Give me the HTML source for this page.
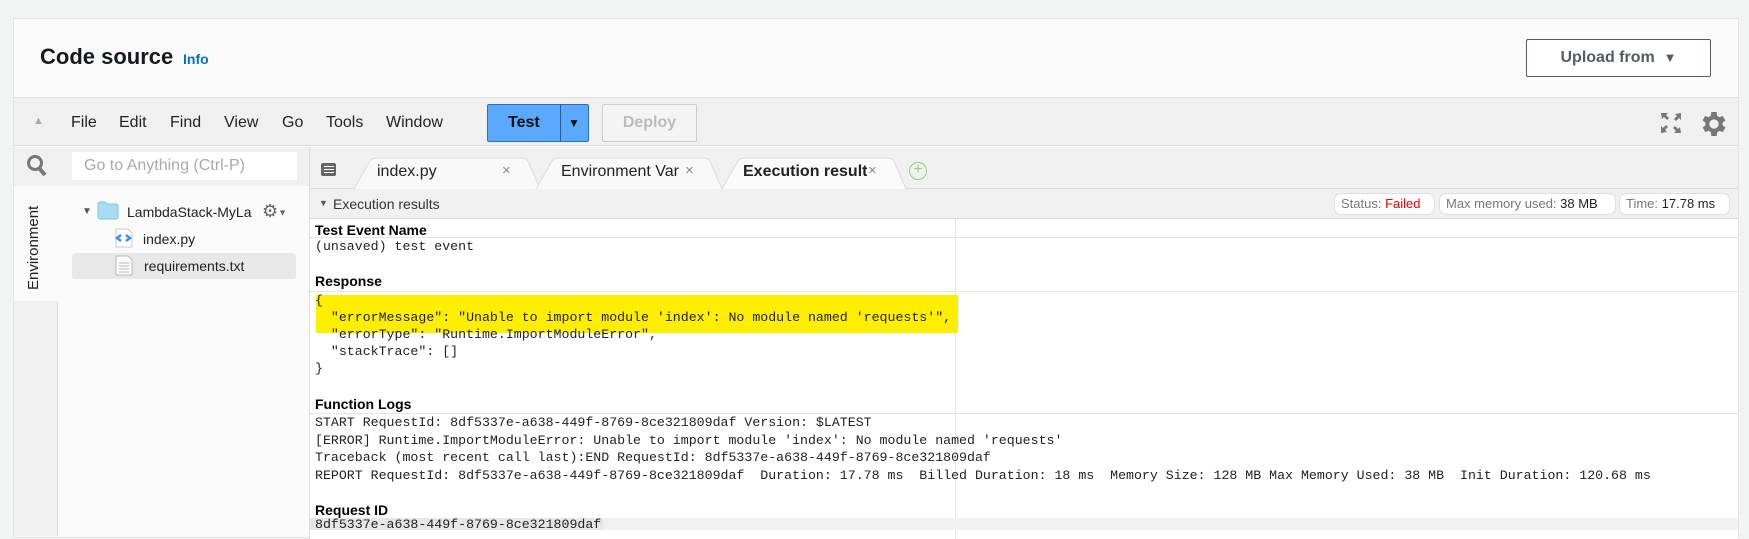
<!DOCTYPE html>
<html><head><meta charset="utf-8"><style>
*{box-sizing:border-box;margin:0;padding:0}
body{width:1749px;height:530px;background:#f2f3f3;font-family:"Liberation Sans",Arial,sans-serif;position:relative;overflow:hidden;color:#16191f}
.a{position:absolute}
.card{left:13px;top:18px;width:1726px;height:520px;background:#fafafa;border:1px solid #e4e4e4}
.mono{font-family:"Liberation Mono",monospace;font-size:13.25px;color:#222;white-space:pre}
.h{font-weight:bold;font-size:14px;color:#000}
.menu{font-size:16px;color:#222;top:114px}
.chip{top:193px;height:22px;border:1px solid #ddd;border-radius:7px;background:#fff;font-size:13px;color:#777;line-height:20px;padding:0 6px;white-space:nowrap}
.chip b{font-weight:normal;color:#222}
</style></head><body>
<div class="a card"></div>
<div class="a" style="left:14px;top:19px;width:1724px;height:78px;background:#fafafa"></div>
<div class="a" style="left:40px;top:44px;font-size:22px;font-weight:bold;color:#16191f">Code source</div>
<div class="a" style="left:183px;top:51px;font-size:14px;font-weight:bold;color:#0073bb">Info</div>
<div class="a" style="left:1526px;top:39px;width:185px;height:38px;border:1px solid #545b64;border-radius:2px;background:#fff;font-size:16px;font-weight:bold;color:#545b64;line-height:36px;text-align:center">Upload from &nbsp;<span style="font-size:13px">▼</span></div>
<div class="a" style="left:14px;top:97px;width:1724px;height:49px;background:#f0f0f0;border-top:1px solid #e0e0e0;border-bottom:1px solid #dcdcdc"></div>
<div class="a" style="left:33px;top:115px;font-size:11px;color:#aaa">▲</div>
<div class="a menu" style="left:71px">File</div>
<div class="a menu" style="left:119px">Edit</div>
<div class="a menu" style="left:170px">Find</div>
<div class="a menu" style="left:224px">View</div>
<div class="a menu" style="left:282px">Go</div>
<div class="a menu" style="left:326px">Tools</div>
<div class="a menu" style="left:386px">Window</div>
<div class="a" style="left:487px;top:104px;width:102px;height:38px;background:#5ba8ff;border:1px solid #2a6fc0;border-radius:2px"></div>
<div class="a" style="left:560px;top:104px;width:1px;height:38px;background:#2a5a9a"></div>
<div class="a" style="left:508px;top:114px;font-size:16px;font-weight:bold;color:#111">Test</div>
<div class="a" style="left:568px;top:116px;font-size:12px;color:#111">▼</div>
<div class="a" style="left:602px;top:104px;width:95px;height:38px;border:1px solid #ccc;border-radius:2px;background:#f4f4f4;font-size:16px;font-weight:bold;color:#bbb;text-align:center;line-height:36px">Deploy</div>
<svg class="a" style="left:1660px;top:112px" width="22" height="22" viewBox="0 0 22 22" fill="#777"><path d="M1 1h7l-2 2 3 3-2 2-3-3-2 2zM21 1v7l-2-2-3 3-2-2 3-3-2-2zM1 21v-7l2 2 3-3 2 2-3 3 2 2zM21 21h-7l2-2-3-3 2-2 3 3 2-2z"/></svg>
<svg class="a" style="left:1698px;top:108px" width="32" height="32" viewBox="0 0 24 24"><path fill="#777" d="M19.4 13a7.5 7.5 0 000-2l2.1-1.6-2-3.5-2.5 1a7.4 7.4 0 00-1.7-1L15 3h-4l-.4 2.9a7.4 7.4 0 00-1.7 1l-2.5-1-2 3.5L6.6 11a7.5 7.5 0 000 2l-2.1 1.6 2 3.5 2.5-1a7.4 7.4 0 001.7 1L11 21h4l.4-2.9a7.4 7.4 0 001.7-1l2.5 1 2-3.5zM13 15.5a3.5 3.5 0 110-7 3.5 3.5 0 010 7z" transform="translate(-1 0)"/></svg>
<div class="a" style="left:14px;top:147px;width:295px;height:39px;background:#f0f0f0"></div>
<svg class="a" style="left:26px;top:154px" width="22" height="24" viewBox="0 0 22 24"><circle cx="9" cy="9" r="6.5" fill="none" stroke="#777" stroke-width="3"/><path d="M13 14l6 7" stroke="#777" stroke-width="4"/></svg>
<div class="a" style="left:72px;top:152px;width:225px;height:28px;background:#fff;font-size:16px;color:#aaa;line-height:28px;padding-left:12px">Go to Anything (Ctrl-P)</div>
<div class="a" style="left:14px;top:186px;width:44px;height:350px;background:#f0f0f0;border-right:1px solid #ddd"></div>
<div class="a" style="left:14px;top:186px;width:45px;height:115px;background:#fafafa"></div>
<div class="a" style="left:25px;top:290px;transform:rotate(-90deg);transform-origin:0 0;font-size:15px;color:#222;white-space:nowrap">Environment</div>
<div class="a" style="left:82px;top:206px;font-size:10px;color:#555">▼</div>
<svg class="a" style="left:97px;top:201px" width="22" height="19" viewBox="0 0 22 19"><path d="M1 3a2 2 0 012-2h5l2 2h9a2 2 0 012 2v11a2 2 0 01-2 2H3a2 2 0 01-2-2z" fill="#a8dcf5" stroke="#7cc4ea"/></svg>
<div class="a" style="left:127px;top:204px;font-size:14px;color:#222">LambdaStack-MyLa</div>
<div class="a" style="left:262px;top:201px;font-size:18px;color:#666">⚙<span style="font-size:9px;vertical-align:middle">▼</span></div>
<svg class="a" style="left:114px;top:228px" width="20" height="20" viewBox="0 0 20 20"><path d="M2 1h12l4 4v14H2z" fill="#fff" stroke="#ccc"/><path d="M7 7l-4 3 4 3M12 7l4 3-4 3" stroke="#3b8eea" stroke-width="2.5" fill="none"/></svg>
<div class="a" style="left:143px;top:231px;font-size:14px;color:#222">index.py</div>
<div class="a" style="left:72px;top:253px;width:224px;height:26px;background:#e8e8e8;border-radius:3px"></div>
<svg class="a" style="left:115px;top:255px" width="19" height="21" viewBox="0 0 19 21"><path d="M1 1h12l4 4v15H1z" fill="#fafafa" stroke="#bbb"/><path d="M4 8h10M4 11h10M4 14h10M4 17h10" stroke="#bbb"/></svg>
<div class="a" style="left:144px;top:258px;font-size:14px;color:#222">requirements.txt</div>
<div class="a" style="left:309px;top:147px;width:1429px;height:42px;background:#f0f0f0;border-bottom:1px solid #ddd;border-left:1px solid #ddd"></div>
<div class="a" style="left:321px;top:163px;width:15px;height:13px;border-radius:2px;background:#666"></div>
<div class="a" style="left:324px;top:166px;width:10px;height:1px;background:#fff;box-shadow:0 3px 0 #fff,0 6px 0 #fff"></div>
<svg class="a" style="left:350px;top:157px" width="560" height="32"><g fill="#f8f8f8" stroke="#ddd"><path d="M4 32 L20 4 Q22 1 28 1 H170 Q176 1 178 4 L190 32"/><path d="M186 32 L202 4 Q204 1 210 1 H352 Q358 1 360 4 L372 32"/><path d="M372 32 L388 4 Q390 1 396 1 H536 Q542 1 544 4 L556 32" fill="#fafafa"/></g></svg>
<div class="a" style="left:377px;top:163px;font-size:16px;color:#222">index.py</div>
<div class="a" style="left:502px;top:162px;font-size:15px;color:#888">×</div>
<div class="a" style="left:561px;top:163px;font-size:16px;color:#222;width:124px;overflow:hidden;white-space:nowrap">Environment Var</div>
<div class="a" style="left:685px;top:162px;font-size:15px;color:#888">×</div>
<div class="a" style="left:743px;top:163px;font-size:16px;font-weight:bold;color:#222;width:124px;overflow:hidden;white-space:nowrap">Execution results</div>
<div class="a" style="left:868px;top:162px;font-size:15px;color:#888">×</div>
<div class="a" style="left:909px;top:162px;width:18px;height:18px;border:1.5px solid #8fd67a;border-radius:50%;color:#8fd67a;font-size:16px;line-height:14px;text-align:center">+</div>
<div class="a" style="left:309px;top:189px;width:1429px;height:30px;background:#f0f0f0;border-bottom:1px solid #ddd;border-left:1px solid #ddd"></div>
<div class="a" style="left:319px;top:198px;font-size:9px;color:#555">▼</div>
<div class="a" style="left:333px;top:196px;font-size:14px;color:#333">Execution results</div>
<div class="a chip" style="left:1334px;width:101px">Status: <span style="color:#e00">Failed</span></div>
<div class="a chip" style="left:1439px;width:177px">Max memory used: <b>38 MB</b></div>
<div class="a chip" style="left:1619px;width:111px">Time: <b>17.78 ms</b></div>
<div class="a" style="left:309px;top:219px;width:1429px;height:320px;background:#fff;border-left:1px solid #ddd"></div>
<div class="a" style="left:955px;top:219px;width:1px;height:320px;background:#e6e6e6"></div>
<div class="a" style="left:310px;top:237px;width:1428px;height:1px;background:#e6e6e6"></div>
<div class="a" style="left:310px;top:291px;width:1428px;height:1px;background:#e6e6e6"></div>
<div class="a" style="left:310px;top:413px;width:1428px;height:1px;background:#e6e6e6"></div>
<div class="a" style="left:316px;top:295px;width:642px;height:38px;background:#ffee00"></div>
<div class="a h" style="left:315px;top:222px">Test Event Name</div>
<div class="a mono" style="left:315px;top:239px">(unsaved) test event</div>
<div class="a h" style="left:315px;top:273px">Response</div>
<div class="a mono" style="left:315px;top:292px;line-height:17px">{
  "errorMessage": "Unable to import module 'index': No module named 'requests'",
  "errorType": "Runtime.ImportModuleError",
  "stackTrace": []
}</div>
<div class="a h" style="left:315px;top:396px">Function Logs</div>
<div class="a mono" style="left:315px;top:414px;line-height:17.5px">START RequestId: 8df5337e-a638-449f-8769-8ce321809daf Version: $LATEST
[ERROR] Runtime.ImportModuleError: Unable to import module 'index': No module named 'requests'
Traceback (most recent call last):END RequestId: 8df5337e-a638-449f-8769-8ce321809daf
REPORT RequestId: 8df5337e-a638-449f-8769-8ce321809daf  Duration: 17.78 ms  Billed Duration: 18 ms  Memory Size: 128 MB Max Memory Used: 38 MB  Init Duration: 120.68 ms</div>
<div class="a h" style="left:315px;top:502px">Request ID</div>
<div class="a" style="left:310px;top:518px;width:1428px;height:12px;background:#f0f0f0"></div>
<div class="a" style="left:310px;top:518px;width:293px;height:12px;background:#e6e6e6"></div>
<div class="a mono" style="left:315px;top:517px">8df5337e-a638-449f-8769-8ce321809daf</div>
</body></html>
